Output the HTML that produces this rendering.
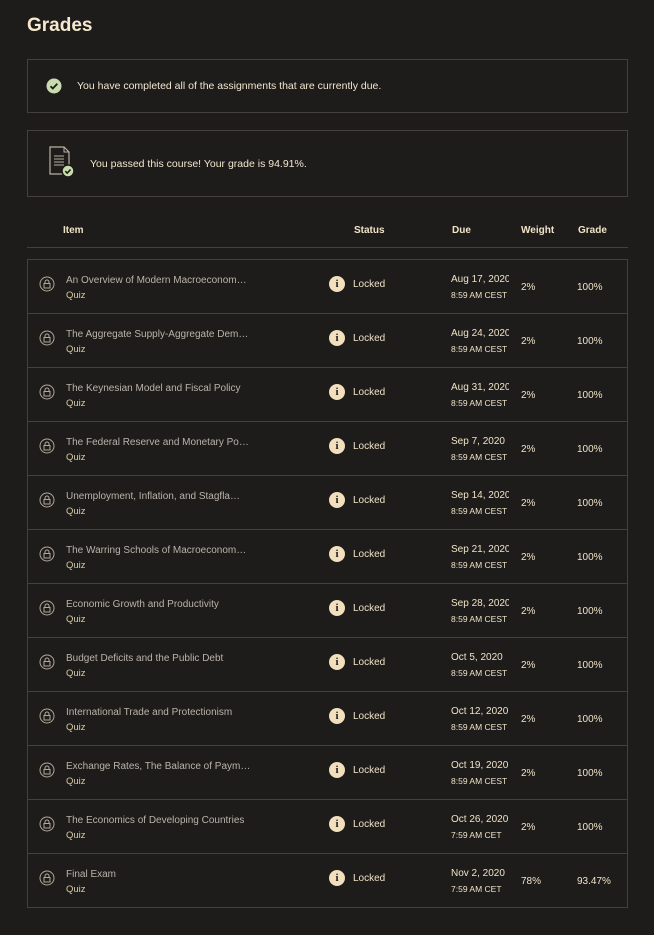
<!DOCTYPE html>
<html><head><meta charset="utf-8"><style>
*{margin:0;padding:0;box-sizing:border-box}
body{width:654px;height:935px;background:#1e1c1a;font-family:"Liberation Sans",sans-serif;color:#f1e6cf;position:relative;overflow:hidden}
.a{position:absolute}
h1{position:absolute;left:27px;top:15px;font-size:19px;font-weight:bold;color:#f6e9cf}
.box{position:absolute;left:27px;width:601px;border:1px solid #44413c}
.t{font-size:10.5px;color:#f1e6cf}
.th{position:absolute;top:225px;font-size:10px;font-weight:bold;color:#efe3c8}
.row{position:absolute;left:27px;width:601px;height:55px;border:1px solid #44413c}
.row .lock{position:absolute;left:11px;top:16px}
.row .nm{position:absolute;left:38px;top:15px;font-size:10px;color:#b9b3aa;white-space:nowrap}
.row .q{position:absolute;left:38px;top:30px;font-size:9.5px;color:#d9cba4}
.row .ic{position:absolute;left:301px;top:16px;width:16px;height:16px;border-radius:50%;background:#f1dfbd;color:#1e1c1a;font:bold 11px "Liberation Serif",serif;text-align:center;line-height:16px}
.row .st{position:absolute;left:325px;top:19px;font-size:10px;color:#efe3c8}
.row .d1{position:absolute;left:423px;top:14px;font-size:10px;color:#efe3c8;width:58px;overflow:hidden;white-space:nowrap}
.row .d2{position:absolute;left:423px;top:30px;font-size:8.5px;color:#efe3c8}
.row .w{position:absolute;left:493px;top:22px;font-size:10px;color:#efe3c8}
.row .g{position:absolute;left:549px;top:22px;font-size:10px;color:#efe3c8}
</style></head><body>
<h1>Grades</h1>
<div class="box" style="top:59px;height:54px">
<svg class="a" style="left:18px;top:18px" width="16" height="16"><circle cx="8" cy="8" r="7.5" fill="#c9dcae"/><path d="M4.5 8.2l2.3 2.3 4.5-4.8" stroke="#1e1c1a" stroke-width="1.8" fill="none"/></svg>
<div class="a t" style="left:49px;top:20px">You have completed all of the assignments that are currently due.</div>
</div>
<div class="box" style="top:130px;height:67px">
<svg class="a" style="left:20px;top:15px" width="30" height="32"><path d="M2 1h14l5 5v22H2z" fill="none" stroke="#b9b0a2" stroke-width="1.2"/><path d="M16 1v5h5" fill="none" stroke="#b9b0a2"/><path d="M6 10h10M6 13h10M6 16h10M6 19h10" stroke="#b9b0a2"/><circle cx="20" cy="25" r="6" fill="#c9dcae" stroke="#1e1c1a" stroke-width="1.5"/><path d="M17.3 25.2l1.9 1.9 3.4-3.6" stroke="#1e1c1a" stroke-width="1.6" fill="none"/></svg>
<div class="a t" style="left:62px;top:27px">You passed this course! Your grade is 94.91%.</div>
</div>
<div class="th" style="left:63px">Item</div>
<div class="th" style="left:354px">Status</div>
<div class="th" style="left:452px">Due</div>
<div class="th" style="left:521px">Weight</div>
<div class="th" style="left:578px">Grade</div>
<div class="a" style="left:27px;top:247px;width:601px;height:1px;background:#44413c"></div>

<div class="row" style="top:259px"><svg class="lock" width="16" height="16"><circle cx="8" cy="8" r="7" fill="none" stroke="#b0a898"/><rect x="5" y="7.5" width="6" height="4.5" fill="none" stroke="#b0a898"/><path d="M6 7.5V6a2 2 0 0 1 4 0v1.5" fill="none" stroke="#b0a898"/></svg><div class="nm">An Overview of Modern Macroeconom…</div><div class="q">Quiz</div><div class="ic">i</div><div class="st">Locked</div><div class="d1">Aug 17, 2020</div><div class="d2">8:59 AM CEST</div><div class="w">2%</div><div class="g">100%</div></div>
<div class="row" style="top:313px"><svg class="lock" width="16" height="16"><circle cx="8" cy="8" r="7" fill="none" stroke="#b0a898"/><rect x="5" y="7.5" width="6" height="4.5" fill="none" stroke="#b0a898"/><path d="M6 7.5V6a2 2 0 0 1 4 0v1.5" fill="none" stroke="#b0a898"/></svg><div class="nm">The Aggregate Supply-Aggregate Dem…</div><div class="q">Quiz</div><div class="ic">i</div><div class="st">Locked</div><div class="d1">Aug 24, 2020</div><div class="d2">8:59 AM CEST</div><div class="w">2%</div><div class="g">100%</div></div>
<div class="row" style="top:367px"><svg class="lock" width="16" height="16"><circle cx="8" cy="8" r="7" fill="none" stroke="#b0a898"/><rect x="5" y="7.5" width="6" height="4.5" fill="none" stroke="#b0a898"/><path d="M6 7.5V6a2 2 0 0 1 4 0v1.5" fill="none" stroke="#b0a898"/></svg><div class="nm">The Keynesian Model and Fiscal Policy</div><div class="q">Quiz</div><div class="ic">i</div><div class="st">Locked</div><div class="d1">Aug 31, 2020</div><div class="d2">8:59 AM CEST</div><div class="w">2%</div><div class="g">100%</div></div>
<div class="row" style="top:421px"><svg class="lock" width="16" height="16"><circle cx="8" cy="8" r="7" fill="none" stroke="#b0a898"/><rect x="5" y="7.5" width="6" height="4.5" fill="none" stroke="#b0a898"/><path d="M6 7.5V6a2 2 0 0 1 4 0v1.5" fill="none" stroke="#b0a898"/></svg><div class="nm">The Federal Reserve and Monetary Po…</div><div class="q">Quiz</div><div class="ic">i</div><div class="st">Locked</div><div class="d1">Sep 7, 2020</div><div class="d2">8:59 AM CEST</div><div class="w">2%</div><div class="g">100%</div></div>
<div class="row" style="top:475px"><svg class="lock" width="16" height="16"><circle cx="8" cy="8" r="7" fill="none" stroke="#b0a898"/><rect x="5" y="7.5" width="6" height="4.5" fill="none" stroke="#b0a898"/><path d="M6 7.5V6a2 2 0 0 1 4 0v1.5" fill="none" stroke="#b0a898"/></svg><div class="nm">Unemployment, Inflation, and Stagfla…</div><div class="q">Quiz</div><div class="ic">i</div><div class="st">Locked</div><div class="d1">Sep 14, 2020</div><div class="d2">8:59 AM CEST</div><div class="w">2%</div><div class="g">100%</div></div>
<div class="row" style="top:529px"><svg class="lock" width="16" height="16"><circle cx="8" cy="8" r="7" fill="none" stroke="#b0a898"/><rect x="5" y="7.5" width="6" height="4.5" fill="none" stroke="#b0a898"/><path d="M6 7.5V6a2 2 0 0 1 4 0v1.5" fill="none" stroke="#b0a898"/></svg><div class="nm">The Warring Schools of Macroeconom…</div><div class="q">Quiz</div><div class="ic">i</div><div class="st">Locked</div><div class="d1">Sep 21, 2020</div><div class="d2">8:59 AM CEST</div><div class="w">2%</div><div class="g">100%</div></div>
<div class="row" style="top:583px"><svg class="lock" width="16" height="16"><circle cx="8" cy="8" r="7" fill="none" stroke="#b0a898"/><rect x="5" y="7.5" width="6" height="4.5" fill="none" stroke="#b0a898"/><path d="M6 7.5V6a2 2 0 0 1 4 0v1.5" fill="none" stroke="#b0a898"/></svg><div class="nm">Economic Growth and Productivity</div><div class="q">Quiz</div><div class="ic">i</div><div class="st">Locked</div><div class="d1">Sep 28, 2020</div><div class="d2">8:59 AM CEST</div><div class="w">2%</div><div class="g">100%</div></div>
<div class="row" style="top:637px"><svg class="lock" width="16" height="16"><circle cx="8" cy="8" r="7" fill="none" stroke="#b0a898"/><rect x="5" y="7.5" width="6" height="4.5" fill="none" stroke="#b0a898"/><path d="M6 7.5V6a2 2 0 0 1 4 0v1.5" fill="none" stroke="#b0a898"/></svg><div class="nm">Budget Deficits and the Public Debt</div><div class="q">Quiz</div><div class="ic">i</div><div class="st">Locked</div><div class="d1">Oct 5, 2020</div><div class="d2">8:59 AM CEST</div><div class="w">2%</div><div class="g">100%</div></div>
<div class="row" style="top:691px"><svg class="lock" width="16" height="16"><circle cx="8" cy="8" r="7" fill="none" stroke="#b0a898"/><rect x="5" y="7.5" width="6" height="4.5" fill="none" stroke="#b0a898"/><path d="M6 7.5V6a2 2 0 0 1 4 0v1.5" fill="none" stroke="#b0a898"/></svg><div class="nm">International Trade and Protectionism</div><div class="q">Quiz</div><div class="ic">i</div><div class="st">Locked</div><div class="d1">Oct 12, 2020</div><div class="d2">8:59 AM CEST</div><div class="w">2%</div><div class="g">100%</div></div>
<div class="row" style="top:745px"><svg class="lock" width="16" height="16"><circle cx="8" cy="8" r="7" fill="none" stroke="#b0a898"/><rect x="5" y="7.5" width="6" height="4.5" fill="none" stroke="#b0a898"/><path d="M6 7.5V6a2 2 0 0 1 4 0v1.5" fill="none" stroke="#b0a898"/></svg><div class="nm">Exchange Rates, The Balance of Paym…</div><div class="q">Quiz</div><div class="ic">i</div><div class="st">Locked</div><div class="d1">Oct 19, 2020</div><div class="d2">8:59 AM CEST</div><div class="w">2%</div><div class="g">100%</div></div>
<div class="row" style="top:799px"><svg class="lock" width="16" height="16"><circle cx="8" cy="8" r="7" fill="none" stroke="#b0a898"/><rect x="5" y="7.5" width="6" height="4.5" fill="none" stroke="#b0a898"/><path d="M6 7.5V6a2 2 0 0 1 4 0v1.5" fill="none" stroke="#b0a898"/></svg><div class="nm">The Economics of Developing Countries</div><div class="q">Quiz</div><div class="ic">i</div><div class="st">Locked</div><div class="d1">Oct 26, 2020</div><div class="d2">7:59 AM CET</div><div class="w">2%</div><div class="g">100%</div></div>
<div class="row" style="top:853px"><svg class="lock" width="16" height="16"><circle cx="8" cy="8" r="7" fill="none" stroke="#b0a898"/><rect x="5" y="7.5" width="6" height="4.5" fill="none" stroke="#b0a898"/><path d="M6 7.5V6a2 2 0 0 1 4 0v1.5" fill="none" stroke="#b0a898"/></svg><div class="nm">Final Exam</div><div class="q">Quiz</div><div class="ic">i</div><div class="st">Locked</div><div class="d1">Nov 2, 2020</div><div class="d2">7:59 AM CET</div><div class="w">78%</div><div class="g">93.47%</div></div>
</body></html>
